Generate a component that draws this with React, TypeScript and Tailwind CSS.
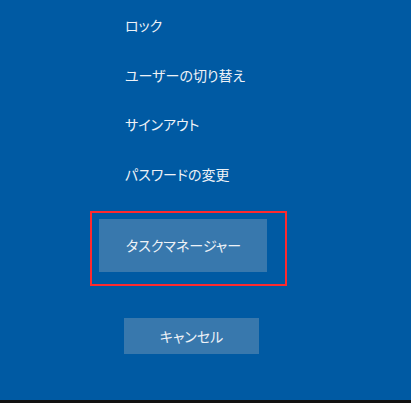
const menuItems = ['ロック', 'ユーザーの切り替え', 'サインアウト', 'パスワードの変更'];

const App = () => {
  return (
    <div
      className="flex h-[403px] w-[411px] flex-col bg-[#005aa3] text-[#eef2f7]"
      style={{ fontFamily: '"Noto Sans CJK JP", "Noto Sans", sans-serif' }}
    >
      <div className="flex flex-1 flex-col">
        <ul className="flex flex-col pl-[125px]">
          {menuItems.map((item) => (
            <li key={item} className="h-[49.5px] text-[14px] leading-[50px] [font-feature-settings:'palt']">
              {item}
            </li>
          ))}
        </ul>

        <div className="ml-[90px] mt-[13px] h-[75px] w-[197px] border-2 border-[#ff2a2e] pl-[7px] pt-[6px]">
          <button
            type="button"
            className="flex h-[53px] w-[168px] items-center bg-[#3878ad] pl-[27px] text-[14px] [font-feature-settings:'palt']"
          >
            タスクマネージャー
          </button>
        </div>

        <button
          type="button"
          className="ml-[124px] mt-[32px] flex h-[36px] w-[135px] items-center justify-center bg-[#3878ad] text-[14px] [font-feature-settings:'palt']"
        >
          キャンセル
        </button>
      </div>

      <div className="h-[3px] bg-[#111111]" />
    </div>
  );
};

export default App;
